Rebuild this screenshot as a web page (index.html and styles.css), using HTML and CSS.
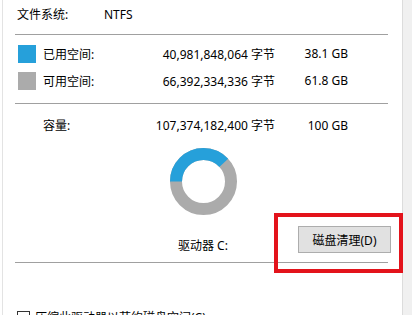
FILE: index.html
```html
<!DOCTYPE html>
<html lang="zh-CN">
<head>
<meta charset="utf-8">
<title>本地磁盘 (C:) 属性</title>
<link rel="stylesheet" href="styles.css">
</head>
<body>
<div class="frame">
  <div class="panel">
    <div class="fs-row"><span class="fs-label">文件系统:</span><span>NTFS</span></div>
    <hr class="sep sep-first">
    <div class="stats">
      <span class="swatch used"></span><span>已用空间:</span><span class="num">40,981,848,064 字节</span><span class="num">38.1 GB</span>
      <span class="swatch free"></span><span>可用空间:</span><span class="num">66,392,334,336 字节</span><span class="num">61.8 GB</span>
    </div>
    <hr class="sep sep-mid">
    <div class="stats cap">
      <span></span><span>容量:</span><span class="num">107,374,182,400 字节</span><span class="num">100 GB</span>
    </div>
    <div class="chart">
      <svg width="67" height="67" viewBox="0 0 67 67">
        <circle cx="33.5" cy="33.5" r="27.5" fill="none" stroke="#ababab" stroke-width="12"/>
        <circle cx="33.5" cy="33.5" r="27.5" fill="none" stroke="#26a0da" stroke-width="12" stroke-dasharray="65.83 200" transform="rotate(180 33.5 33.5)"/>
      </svg>
    </div>
    <div class="drive-row">
      <span class="drive">驱动器 C:</span>
      <button class="btn" type="button">磁盘清理(D)</button>
      <span class="highlight"></span>
    </div>
    <hr class="sep sep-low">
    <label class="check"><span class="box"></span><span>压缩此驱动器以节约磁盘空间(C)</span></label>
  </div>
  <div class="scrollbar"></div>
</div>
</body>
</html>
```
FILE: styles.css
```css
html, body {
  margin: 0;
  padding: 0;
  background: #ffffff;
  overflow: hidden;
}
body {
  font-family: "Noto Sans", "Noto Sans CJK SC", sans-serif;
  font-size: 12px;
  color: #000000;
  padding-left: 2px;
}
.frame {
  display: flex;
  height: 315px;
  border-left: 1px solid #e3e3e3;
}
.panel {
  width: 376px;
  padding: 0 11px 0 12px;
  flex: none;
}
.scrollbar {
  flex: 1;
  background: #f0f0f0;
  border-left: 1px solid #dcdcdc;
}
.fs-row {
  display: flex;
  height: 30px;
  line-height: 30px;
  padding-left: 2px;
}
.fs-label {
  width: 87px;
}
.sep {
  border: 0;
  border-top: 1px solid #a0a0a0;
  height: 0;
  margin: 0 3px 0 0;
}
.sep-first { margin-top: 4px; }
.sep-mid { margin-top: 9px; }
.sep-low { margin-top: 9px; }
.stats {
  display: grid;
  grid-template-columns: 25px 100px 132px 73px;
  grid-auto-rows: 27px;
  align-items: center;
  padding-left: 3px;
  margin-top: 5px;
}
.stats.cap {
  margin-top: 11px;
  grid-auto-rows: 20px;
}
.num {
  text-align: right;
  white-space: nowrap;
}
.swatch {
  width: 18px;
  height: 18px;
}
.swatch.used { background: #26a0da; }
.swatch.free { background: #ababab; }
.chart {
  margin: 13px 0 0 155px;
  height: 67px;
}
.chart svg { display: block; }
.drive-row {
  position: relative;
  display: flex;
  height: 27px;
  margin-top: 11px;
  padding-left: 163px;
}
.drive {
  align-self: flex-end;
  line-height: 16px;
  margin-bottom: -1px;
}
.btn {
  margin-left: auto;
  width: 93px;
  height: 27px;
  background: #e1e1e1;
  border: 1px solid #adadad;
  font: inherit;
  color: #000;
  padding: 0;
}
.highlight {
  position: absolute;
  left: 259px;
  top: -13px;
  width: 121px;
  height: 52px;
  border: 4px solid #e3131b;
  z-index: 2;
}
.check {
  display: flex;
  align-items: center;
  gap: 5px;
  height: 20px;
  margin-top: 44px;
  padding-left: 2px;
}
.box {
  width: 11px;
  height: 11px;
  border: 1px solid #333333;
  background: #fff;
}
```
